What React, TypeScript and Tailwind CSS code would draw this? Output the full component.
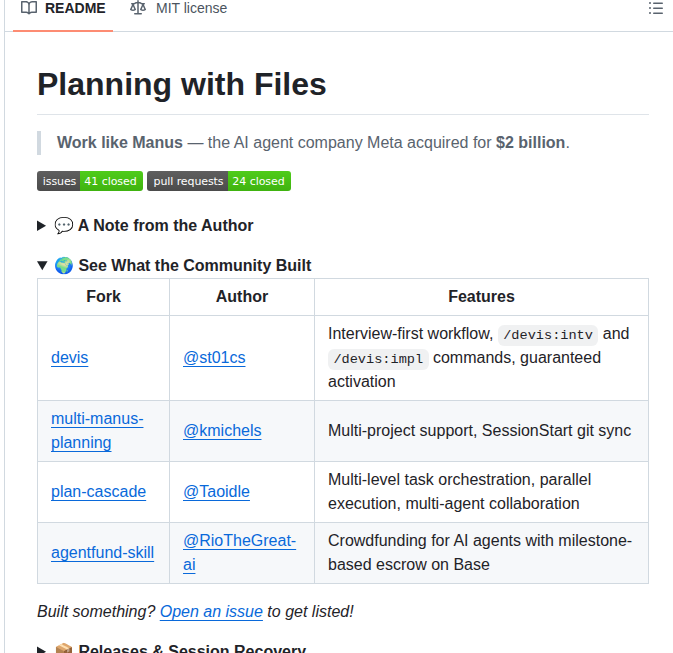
import React from "react";

const Octicon = ({ d, className = "" }: { d: string; className?: string }) => (
  <svg viewBox="0 0 16 16" width="16" height="16" fill="currentColor" className={className}>
    <path d={d} />
  </svg>
);

const bookPath =
  "M0 1.75A.75.75 0 0 1 .75 1h4.253c1.227 0 2.317.59 3 1.501A3.743 3.743 0 0 1 11.006 1h4.245a.75.75 0 0 1 .75.75v10.5a.75.75 0 0 1-.75.75h-4.507a2.25 2.25 0 0 0-1.591.659l-.622.621a.75.75 0 0 1-1.06 0l-.622-.621A2.25 2.25 0 0 0 5.258 13H.75a.75.75 0 0 1-.75-.75Zm7.251 10.324.004-5.073-.002-2.253A2.25 2.25 0 0 0 5.003 2.5H1.5v9h3.757a3.75 3.75 0 0 1 1.994.574ZM8.755 4.75l-.004 7.322a3.752 3.752 0 0 1 1.992-.572H14.5v-9h-3.495a2.25 2.25 0 0 0-2.25 2.25Z";
const lawPath =
  "M8.75.75V2h.985c.304 0 .603.08.867.231l1.29.736c.038.022.08.033.124.033h2.234a.75.75 0 0 1 0 1.5h-.427l2.111 4.692a.75.75 0 0 1-.154.838l-.53-.53.529.531-.001.002-.002.002-.006.006-.006.005-.01.01-.045.04c-.21.176-.441.327-.686.45C14.556 10.78 13.88 11 13 11a4.498 4.498 0 0 1-2.023-.454 3.544 3.544 0 0 1-.686-.45l-.045-.04-.016-.015-.006-.006-.004-.004v-.001a.75.75 0 0 1-.154-.838L12.178 4.5h-.162c-.305 0-.604-.079-.868-.231l-1.29-.736a.245.245 0 0 0-.124-.033H8.75V13h2.5a.75.75 0 0 1 0 1.5h-6.5a.75.75 0 0 1 0-1.5h2.5V3.5h-.984a.245.245 0 0 0-.124.033l-1.289.737c-.265.15-.564.23-.869.23h-.162l2.112 4.692a.75.75 0 0 1-.154.838l-.53-.53.529.531-.001.002-.002.002-.006.006-.016.015-.045.04c-.21.176-.441.327-.686.45C4.556 10.78 3.88 11 3 11a4.498 4.498 0 0 1-2.023-.454 3.544 3.544 0 0 1-.686-.45l-.045-.04-.016-.015-.006-.006-.004-.004v-.001a.75.75 0 0 1-.154-.838L2.178 4.5H1.75a.75.75 0 0 1 0-1.5h2.234a.249.249 0 0 0 .125-.033l1.288-.737c.265-.15.564-.23.869-.23h.984V.75a.75.75 0 0 1 1.5 0Zm2.945 8.477c.285.135.718.273 1.305.273s1.02-.138 1.305-.273L13 6.327Zm-10 0c.285.135.718.273 1.305.273s1.02-.138 1.305-.273L3 6.327Z";
const listPath =
  "M5.75 2.5h8.5a.75.75 0 0 1 0 1.5h-8.5a.75.75 0 0 1 0-1.5Zm0 5h8.5a.75.75 0 0 1 0 1.5h-8.5a.75.75 0 0 1 0-1.5Zm0 5h8.5a.75.75 0 0 1 0 1.5h-8.5a.75.75 0 0 1 0-1.5ZM2 14a1 1 0 1 1 0-2 1 1 0 0 1 0 2Zm1-6a1 1 0 1 1-2 0 1 1 0 0 1 2 0ZM2 4a1 1 0 1 1 0-2 1 1 0 0 1 0 2Z";

const Badge = ({ label, value, labelW, valueW }: { label: string; value: string; labelW: string; valueW: string }) => (
  <span className="flex h-5 overflow-hidden rounded-[3px] font-['DejaVu_Sans',sans-serif] text-[11px] leading-[21px] text-white">
    <span className={`${labelW} bg-gradient-to-b from-[#5f5f5f] to-[#4b4b4b] pl-[2px] text-center tracking-[-0.1px]`}>{label}</span>
    <span className={`${valueW} bg-gradient-to-b from-[#4fcc1a] to-[#3fb30f] pr-[2px] text-center tracking-[-0.05px]`}>{value}</span>
  </span>
);

const Link = ({ children }: { children: React.ReactNode }) => (
  <a href="#" className="text-[#0969da] underline underline-offset-[3px]">
    {children}
  </a>
);

const Code = ({ children }: { children: React.ReactNode }) => (
  <code className="rounded-md bg-[#818b981f] px-[5.4px] py-[2.7px] font-['Liberation_Mono',monospace] text-[13.6px] leading-none">
    {children}
  </code>
);

const rows: { fork: string; author: string; features: React.ReactNode }[] = [
  {
    fork: "devis",
    author: "@st01cs",
    features: (
      <>
        Interview-first workflow, <Code>/devis:intv</Code> and <Code>/devis:impl</Code> commands, guaranteed activation
      </>
    ),
  },
  { fork: "multi-manus-planning", author: "@kmichels", features: "Multi-project support, SessionStart git sync" },
  { fork: "plan-cascade", author: "@Taoidle", features: "Multi-level task orchestration, parallel execution, multi-agent collaboration" },
  { fork: "agentfund-skill", author: "@RioTheGreat-ai", features: "Crowdfunding for AI agents with milestone-based escrow on Base" },
];

const tdClass = "border border-[#d1d9e0] px-[13px] py-[6px]";

export default function App() {
  return (
    <div className="h-[653px] overflow-hidden bg-white font-['Liberation_Sans',sans-serif] text-base leading-6 text-[#1f2328]">
      <div className="ml-1 h-[653px] border-l border-[#d1d9e0]">
        {/* Tabs */}
        <div className="flex h-8 items-start justify-between border-b border-[#d1d9e0] pl-2 pr-[8px]">
          <div className="flex">
            <div className="flex h-[31.5px] w-[100px] items-start gap-2 border-b-2 border-[#fd8c73] pl-[8px] text-sm font-semibold leading-4">
              <Octicon d={bookPath} className="text-[#59636e]" />
              <span className="font-bold">README</span>
            </div>
            <div className="ml-[17px] flex items-start gap-2 text-sm leading-4 text-[#4b545e]">
              <Octicon d={lawPath} className="text-[#59636e]" />
              <span className="ml-[2px]">MIT license</span>
            </div>
          </div>
          <Octicon d={listPath} className="mr-[1px] text-[#59636e]" />
        </div>

        {/* Readme body */}
        <div className="pl-8 pr-[24px] pt-[32px]">
          <h1 className="border-b border-[#d1d9e0b3] pb-[10px] text-[32px] font-bold leading-[40px]">Planning with Files</h1>

          <blockquote className="mt-4 border-l-4 border-[#d1d9e0] pl-4 text-[#59636e]">
            <strong>Work like Manus</strong> — the AI agent company Meta acquired for <strong>$2 billion</strong>.
          </blockquote>

          <div className="mt-4 flex gap-1">
            <Badge label="issues" value="41 closed" labelW="w-[43px]" valueW="w-[63px]" />
            <Badge label="pull requests" value="24 closed" labelW="w-[81px]" valueW="w-[63px]" />
          </div>

          <details className="mt-[23px]">
            <summary className="font-bold">💬 A Note from the Author</summary>
            <p>Hidden</p>
          </details>

          <details open className="mt-4">
            <summary className="font-bold">🌍 See What the Community Built</summary>
            <table className="mb-4 w-[612px] table-fixed border-collapse">
              <thead>
                <tr>
                  <th className={`${tdClass} w-[132px] font-bold`}>Fork</th>
                  <th className={`${tdClass} w-[145px] font-bold`}>Author</th>
                  <th className={`${tdClass} font-bold`}>Features</th>
                </tr>
              </thead>
              <tbody>
                {rows.map((row, i) => (
                  <tr key={row.fork} className={i % 2 === 1 ? "bg-[#f6f8fa]" : ""}>
                    <td className={tdClass}>
                      <Link>{row.fork}</Link>
                    </td>
                    <td className={tdClass}>
                      <Link>{row.author}</Link>
                    </td>
                    <td className={tdClass}>{row.features}</td>
                  </tr>
                ))}
              </tbody>
            </table>
            <p className="italic">
              Built something? <Link>Open an issue</Link> to get listed!
            </p>
          </details>

          <details className="mt-4">
            <summary className="font-bold">📦 Releases &amp; Session Recovery</summary>
            <p>Hidden</p>
          </details>
        </div>
      </div>
    </div>
  );
}
